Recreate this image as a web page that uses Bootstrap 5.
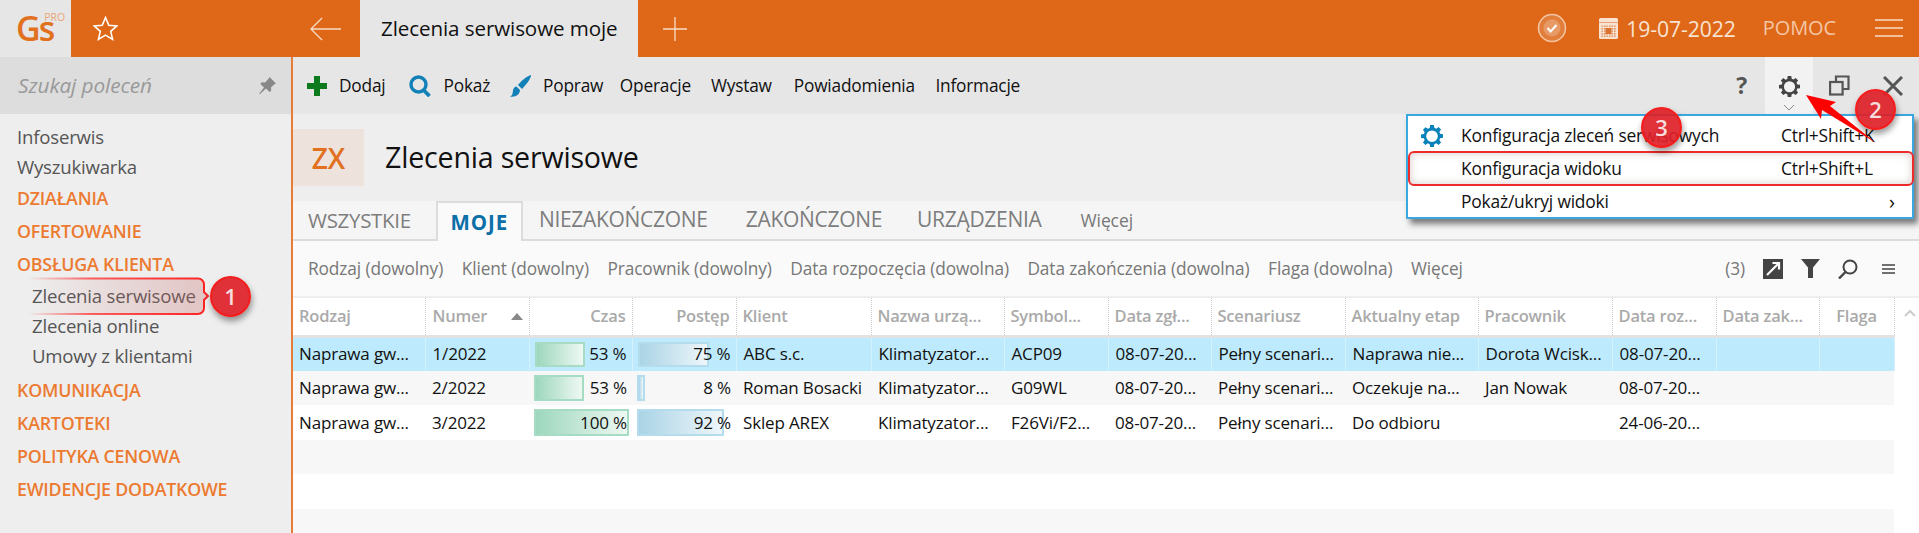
<!DOCTYPE html>
<html lang="pl"><head><meta charset="utf-8">
<link href="https://cdn.jsdelivr.net/npm/bootstrap@5.3.0/dist/css/bootstrap.min.css" rel="stylesheet">
<style>
html,body{height:100%;overflow:hidden}
body{font-family:"Open Sans","Noto Sans",sans-serif;font-size:17px;color:#111;background:#fff;letter-spacing:-.1px}
.shell{width:1919px;height:533px;position:relative;overflow:hidden}
.topbar{height:57px;background:#df6818}
.logo-box{width:71px;background:#e6e6e6;color:#e1701f;padding-left:16px;flex:none}
.logo-g{font-size:34px;font-weight:600;line-height:56px;letter-spacing:-2px}
.logo-pro{font-size:10.5px;color:#eaa77a;margin-top:11px;line-height:12px;margin-left:-9px;letter-spacing:0}
.star-area{width:289px;padding-left:22px;flex:none}
.arrow-back{margin-left:192px}
.tab-active{width:278px;background:#e6e6e6;font-size:20.6px;padding-left:21px;color:#111;flex:none}
.tb-right{color:#f8e3d3;font-size:21.2px;padding-left:25px}
.pomoc{color:#f3c6a5;font-size:20px;margin:0 39px 0 27px}
.main{height:476px}
.side{width:293px;background:#eee;border-right:2px solid #e67c35;flex:none}
.side-search{height:57px;background:#ddd;padding:0 15px 0 18px;color:#999;font-style:italic;font-size:20.8px}
.side-list{padding-top:8px}
.side-item{color:#555;font-size:18.6px;line-height:30px;padding-left:17px;letter-spacing:-.2px}
.side-sub{padding-left:32px}
.side-head{color:#ec7a30;font-weight:600;font-size:17.8px;line-height:33px;padding-left:17px;letter-spacing:-.2px}
.side-head.after-sub{margin-top:3px}
.content{flex:1;min-width:0}
.toolbar{height:57px;background:#e6e6e6;padding-left:14px}
.tool{font-size:17.3px;color:#111;margin-right:19px;letter-spacing:-.2px}
.tool-dodaj{margin-right:24px}
.tool-popraw{margin-right:16.5px}
.tool-oper{margin-right:20px}
.tool-wystaw{margin-right:22px}
.tool-powiad{margin-right:20.5px}
.tool-ic{margin-right:12px;flex:none}
.gear-cell{width:48px;height:57px;background:#f2f2f2;margin-right:16px;padding-top:19px}
.chev{margin-top:8px}
.help-q{font-size:23px;color:#555;font-weight:700;margin-right:18px}
.x-ic{margin:0 16px 0 33px}
.head-band{height:87px;background:#eee}
.zx{width:71px;height:57px;background:#eee3dc;color:#e1701f;font-size:28px;font-weight:600}
.page-title{font-size:28.6px;margin-left:21px;color:#111;font-weight:400;letter-spacing:-.2px}
.tabs-row{height:40px;background:#f5f5f5;border-bottom:2px solid #dcdcdc;padding-left:15px}
.tab-x{font-size:21px;color:#7d7d7d;height:38px;letter-spacing:-.3px;margin-right:38px}
.tab-x.before-on{margin-right:25px;font-size:20.5px}
.tab-x.tab-zak{margin-right:35px}
.tab-x.tab-urz{margin-right:39px}
.tab-on{background:#fafafa;border:2px solid #dcdcdc;border-bottom:0;color:#0b6fa8;font-weight:700;height:40px;width:87px;margin:0 16px -2px 0;font-size:20.5px;letter-spacing:1px}
.tab-x.tab-more{font-size:17.5px;color:#777;letter-spacing:-.1px}
.filters{height:57px;background:#fafafa;padding-left:15px;color:#777;font-size:17.3px;border-bottom:2px solid #eee}
.filters .fl{margin-right:18.500px}
.filter-tools{margin-right:24px}
.filter-tools>*{margin-left:18px}
.grid-wrap{width:1601px}
.grid-table{width:100%;table-layout:fixed;border-collapse:collapse;margin:0;font-size:17px}
.grid-table th{font-weight:600;color:#aaa;height:38px;padding:0 6px;border-right:1px dotted #ccc;border-bottom:3px solid #e2e2e2;background:#fff;white-space:nowrap;overflow:hidden;font-size:16.5px;letter-spacing:-.2px}
.grid-table td{height:34.500px;padding:0 7px;white-space:nowrap;overflow:hidden;color:#111;letter-spacing:-.15px}
.grid-table tr>:first-child{padding-left:6px}
.num-head{padding-left:1px}
.rsel td{background:#bdeafc;border-right:1px solid #d4f1fd}
.ralt td{background:#f7f7f7}
.grid-table td.bar-cell{position:relative;text-align:right;padding:0 5px 0 0}
.bar-val{position:relative}
.bar-fill{position:absolute;left:5px;top:4px;bottom:4px;border:2px solid}
.bar-g{background:linear-gradient(90deg,#9dd7bd,#eef8f3);border-color:#a6dcc3}
.bar-b{background:linear-gradient(90deg,#aad4e6,#eef6fa);border-color:#b5dcec}
.scroll-up{position:absolute;left:1904px;top:309px}
.menu-pop{position:absolute;left:1406px;top:114px;width:508px;height:105px;padding-top:3px;background:#fff;border:2px solid #3ba7e0;box-shadow:4px 5px 6px rgba(0,0,0,.5);font-size:17.4px;letter-spacing:-.2px}
.menu-row{height:33px;padding-left:53px;position:relative}
.menu-short{position:absolute;left:373px}
.menu-arrow{position:absolute;left:481px;font-size:20px}
.menu-gear{position:absolute;left:13px}
.mark-circle{position:absolute;width:41px;height:41px;border-radius:50%;background:rgba(222,32,40,.92);border:2px solid #f51c1c;color:#f6dede;font-size:22px;font-weight:600;box-shadow:1px 4px 6px rgba(0,0,0,.4)}
.mark-1{left:210px;top:276px}.mark-2{left:1855px;top:89px}.mark-3{left:1641px;top:107px}
.outline-red{position:absolute;left:1408px;top:151px;width:506px;height:35px;border:2px solid #ee2b2b;border-radius:6px;box-shadow:inset 0 0 8px rgba(120,60,60,.28)}
.callout{position:absolute;left:26px;top:277px}
.red-arrow{position:absolute;left:1800px;top:90px}
</style></head><body>
<div class="shell">
 <div class="topbar d-flex align-items-stretch">
  <div class="logo-box d-flex"><span class="logo-g">Gs</span><span class="logo-pro">PRO</span></div>
  <div class="star-area d-flex align-items-center">
   <svg width="25" height="25" viewBox="0 0 24 24" fill="none" stroke="#fff" stroke-width="1.500"><path d="M12 1.500l3.100 7.300 7.900.7-6 5.200 1.800 7.700-6.800-4.100-6.800 4.100 1.800-7.700-6-5.200 7.900-.7z"/></svg>
   <svg class="arrow-back" width="31" height="24" viewBox="0 0 31 24" fill="none" stroke="#f8dcc6" stroke-width="1.300"><path d="M31 12H1M12 1L1 12l11 11"/></svg>
  </div>
  <div class="tab-active d-flex align-items-center">Zlecenia serwisowe moje</div>
  <div class="flex-grow-1 d-flex align-items-center tb-right">
   <svg width="24" height="24" viewBox="0 0 24 24" stroke="#f8dcc6" stroke-width="1.300" fill="none"><path d="M12 0v24M0 12h24"/></svg>
   <div class="ms-auto d-flex align-items-center">
    <svg width="30" height="30" viewBox="0 0 30 30" fill="none" class="me-4"><circle cx="15" cy="15" r="13.500" stroke="#f3c6a5" stroke-width="1.500" fill="#e27e3c"/><circle cx="15" cy="15" r="8.500" fill="#e89a66"/><path d="M10.500 15l3.200 3.500 5.800-6.500" stroke="#fff" stroke-width="2"/></svg>
    <svg class="ms-2" width="19" height="21" viewBox="0 0 19 21"><defs><pattern id="calDots" width="2.500" height="2.500" patternUnits="userSpaceOnUse"><rect width="1.500" height="1.500" fill="#dd8c55"/></pattern></defs><rect width="19" height="21" rx="1.500" fill="#f8e3d3"/><rect y="4" width="19" height="1" fill="#e9a678"/><rect x="2" y="7" width="15" height="12" fill="url(#calDots)"/><rect x="6.500" y="10" width="6" height="6" fill="#d9732f"/></svg>
    <span class="ms-2">19-07-2022</span>
    <span class="pomoc">POMOC</span>
    <svg class="me-3" width="28" height="18" viewBox="0 0 28 18" stroke="#f8dcc6" stroke-width="1.400"><path d="M0 1h28M0 9h28M0 17h28"/></svg>
   </div>
  </div>
 </div>
 <div class="main d-flex">
  <div class="side">
   <div class="side-search d-flex align-items-center justify-content-between">Szukaj poleceń
    <svg width="17" height="17" viewBox="0 0 17 17" fill="#888"><path d="M10.500 0L17 6.500l-1.600.7-3.400 3.300.2 3.300-1.600 1.300-3.600-3.600L1 17l-1 0 5-6.500-3.600-3.600L2.700 5.300l3.300.2 3.300-3.400z"/></svg></div>
   <div class="side-list">
    <div class="side-item">Infoserwis</div>
    <div class="side-item">Wyszukiwarka</div>
    <div class="side-head">DZIAŁANIA</div>
    <div class="side-head">OFERTOWANIE</div>
    <div class="side-head">OBSŁUGA KLIENTA</div>
    <div class="side-item side-sub">Zlecenia serwisowe</div>
    <div class="side-item side-sub">Zlecenia online</div>
    <div class="side-item side-sub">Umowy z klientami</div>
    <div class="side-head after-sub">KOMUNIKACJA</div>
    <div class="side-head">KARTOTEKI</div>
    <div class="side-head">POLITYKA CENOWA</div>
    <div class="side-head">EWIDENCJE DODATKOWE</div>
   </div>
  </div>
  <div class="content">
   <div class="toolbar d-flex align-items-center">
    <svg class="tool-ic" width="20" height="20" viewBox="0 0 20 20" fill="#0d7a1d"><path d="M7 0h6v7h7v6h-7v7H7v-7H0V7h7z"/></svg><span class="tool tool-dodaj">Dodaj</span>
    <svg class="tool-ic" width="22" height="22" viewBox="0 0 22 22" fill="none" stroke="#1281b8" stroke-width="3.400"><circle cx="9.500" cy="9.500" r="7.500"/><path d="M14.500 15l6 6" stroke-width="3.800"/></svg><span class="tool">Pokaż</span>
    <svg class="tool-ic" width="22" height="22" viewBox="0 0 22 22" fill="#1281b8"><path d="M22 0c0 4-6 11-9 14l-4-4c3-4 9-9 13-10zM7.500 11.500l3.500 3.500c0 4-4 7.500-10 6.500 3-1 2.500-4 3-6 .4-2.500 2-4 3.500-4z"/></svg><span class="tool tool-popraw">Popraw</span>
    <span class="tool tool-oper">Operacje</span><span class="tool tool-wystaw">Wystaw</span><span class="tool tool-powiad">Powiadomienia</span><span class="tool">Informacje</span>
    <div class="ms-auto d-flex align-items-center">
     <span class="help-q">?</span>
     <div class="gear-cell d-flex flex-column align-items-center">
      <svg width="21" height="21" viewBox="0 0 20 20"><use href="#gear" fill="#444"/></svg>
      <svg class="chev" width="12" height="6" viewBox="0 0 12 6" fill="none" stroke="#888"><path d="M1 0l5 5 5-5"/></svg>
     </div>
     <svg width="21" height="21" viewBox="0 0 21 21" fill="none" stroke="#555" stroke-width="2.200"><rect x="1.100" y="7" width="12.500" height="12.500"/><path d="M7 7V1.500h12.500v12.500H14"/></svg>
     <svg class="x-ic" width="20" height="20" viewBox="0 0 20 20" stroke="#555" stroke-width="3"><path d="M1 1l18 18M19 1L1 19"/></svg>
    </div>
   </div>
   <div class="head-band d-flex align-items-center">
    <div class="zx d-flex align-items-center justify-content-center">ZX</div>
    <h1 class="page-title mb-0">Zlecenia serwisowe</h1>
   </div>
   <div class="tabs-row d-flex align-items-center">
    <span class="tab-x before-on d-flex align-items-center">WSZYSTKIE</span>
    <span class="tab-on d-flex align-items-center justify-content-center">MOJE</span>
    <span class="tab-x d-flex align-items-center">NIEZAKOŃCZONE</span>
    <span class="tab-x tab-zak d-flex align-items-center">ZAKOŃCZONE</span>
    <span class="tab-x tab-urz d-flex align-items-center">URZĄDZENIA</span>
    <span class="tab-x tab-more d-flex align-items-center">Więcej</span>
   </div>
   <div class="filters d-flex align-items-center">
    <span class="fl">Rodzaj (dowolny)</span><span class="fl">Klient (dowolny)</span><span class="fl">Pracownik (dowolny)</span><span class="fl">Data rozpoczęcia (dowolna)</span><span class="fl">Data zakończenia (dowolna)</span><span class="fl">Flaga (dowolna)</span><span class="fl">Więcej</span>
    <div class="ms-auto d-flex align-items-center filter-tools">
     <span>(3)</span>
     <svg width="20" height="20" viewBox="0 0 20 20"><rect width="20" height="20" fill="#444"/><path d="M4 16L16 4M9.500 4H16v6.500" stroke="#fff" stroke-width="2.200" fill="none"/></svg>
     <svg width="19" height="19" viewBox="0 0 19 19" fill="#444"><path d="M0 0h19l-7 8.500V19H7V8.500z"/></svg>
     <svg width="20" height="20" viewBox="0 0 20 20" fill="none" stroke="#444" stroke-width="2"><circle cx="12" cy="8" r="6.500"/><path d="M7.500 13L1 19.500" stroke-width="2.400"/></svg>
     <svg class="ms-4" width="13" height="10" viewBox="0 0 13 10" stroke="#444" stroke-width="1.500"><path d="M0 1h13M0 5h13M0 9h13"/></svg>
    </div>
   </div>
   <div class="grid-wrap">
   <table class="grid-table">
    <colgroup><col style="width:132px"><col style="width:104px"><col style="width:103px"><col style="width:104px"><col style="width:135px"><col style="width:133px"><col style="width:104px"><col style="width:103px"><col style="width:134px"><col style="width:133px"><col style="width:134px"><col style="width:104px"><col style="width:103px"><col style="width:75px"></colgroup>
    <thead><tr><th>Rodzaj</th><th><div class="d-flex justify-content-between align-items-center num-head">Numer<svg width="12" height="7" viewBox="0 0 12 7" fill="#888"><path d="M6 0l6 7H0z"/></svg></div></th><th class="text-end">Czas</th><th class="text-end">Postęp</th><th>Klient</th><th>Nazwa urzą...</th><th>Symbol...</th><th>Data zgł...</th><th>Scenariusz</th><th>Aktualny etap</th><th>Pracownik</th><th>Data roz...</th><th>Data zak...</th><th class="text-center">Flaga</th></tr></thead>
    <tbody>
    <tr class="rsel"><td>Naprawa gw...</td><td>1/2022</td><td class="bar-cell"><span class="bar-fill bar-g" style="width:50px"></span><span class="bar-val">53 %</span></td><td class="bar-cell"><span class="bar-fill bar-b" style="width:71px"></span><span class="bar-val">75 %</span></td><td>ABC s.c.</td><td>Klimatyzator...</td><td>ACP09</td><td>08-07-20...</td><td>Pełny scenari...</td><td>Naprawa nie...</td><td>Dorota Wcisk...</td><td>08-07-20...</td><td></td><td></td></tr>
    <tr class="ralt"><td>Naprawa gw...</td><td>2/2022</td><td class="bar-cell"><span class="bar-fill bar-g" style="width:50px"></span><span class="bar-val">53 %</span></td><td class="bar-cell"><span class="bar-fill bar-b" style="width:8px"></span><span class="bar-val">8 %</span></td><td>Roman Bosacki</td><td>Klimatyzator...</td><td>G09WL</td><td>08-07-20...</td><td>Pełny scenari...</td><td>Oczekuje na...</td><td>Jan Nowak</td><td>08-07-20...</td><td></td><td></td></tr>
    <tr><td>Naprawa gw...</td><td>3/2022</td><td class="bar-cell"><span class="bar-fill bar-g" style="width:95px"></span><span class="bar-val">100 %</span></td><td class="bar-cell"><span class="bar-fill bar-b" style="width:87px"></span><span class="bar-val">92 %</span></td><td>Sklep AREX</td><td>Klimatyzator...</td><td>F26Vi/F2...</td><td>08-07-20...</td><td>Pełny scenari...</td><td>Do odbioru</td><td></td><td>24-06-20...</td><td></td><td></td></tr>
    <tr class="ralt"><td colspan="14">&nbsp;</td></tr>
    <tr><td colspan="14">&nbsp;</td></tr>
    <tr class="ralt"><td colspan="14">&nbsp;</td></tr>
    </tbody>
   </table>
   </div>
  </div>
 </div>
 <svg class="scroll-up" width="12" height="8" viewBox="0 0 12 8" fill="none" stroke="#ccc" stroke-width="2"><path d="M1 7l5-5 5 5"/></svg>
 <svg width="0" height="0" class="position-absolute"><defs><path id="gear" fill-rule="evenodd" d="M8.300 0h3.400l.4 2.600 1.700.7 2.100-1.500 2.300 2.400-1.500 2.100.7 1.700 2.600.4v3.200l-2.600.4-.7 1.700 1.500 2.100-2.300 2.400-2.100-1.500-1.700.7-.4 2.600H8.300l-.4-2.600-1.700-.7-2.100 1.500-2.300-2.400 1.500-2.100-.7-1.700L0 11.800V8.600l2.600-.4.7-1.700-1.500-2.100 2.300-2.400 2.100 1.500 1.700-.7zM10 4.900a5.300 5.300 0 1 0 0 10.600 5.300 5.300 0 0 0 0-10.600z"/><linearGradient id="fadeS" x1="0" x2="1" y1="0" y2="0"><stop offset="0" stop-color="#f22" stop-opacity="0"/><stop offset=".35" stop-color="#f22" stop-opacity=".7"/><stop offset="1" stop-color="#f22"/></linearGradient><linearGradient id="fadeF" x1="0" x2="1" y1="0" y2="0"><stop offset="0" stop-color="#c86a6a" stop-opacity="0"/><stop offset="1" stop-color="#c86a6a" stop-opacity=".32"/></linearGradient></defs></svg>
 <div class="menu-pop">
  <div class="menu-row d-flex align-items-center"><svg class="menu-gear" width="22" height="22" viewBox="0 0 20 20"><use href="#gear" fill="#0b82b8"/></svg>Konfiguracja zleceń serwisowych<span class="menu-short">Ctrl+Shift+K</span></div>
  <div class="menu-row d-flex align-items-center">Konfiguracja widoku<span class="menu-short">Ctrl+Shift+L</span></div>
  <div class="menu-row d-flex align-items-center">Pokaż/ukryj widoki<span class="menu-arrow">›</span></div>
 </div>
 <div class="outline-red"></div>
 <svg class="callout" width="186" height="38" viewBox="0 0 186 38" fill="none"><path d="M2 1.500h170a6 6 0 0 1 6 6V15l4 4-4 4v8a6 6 0 0 1-6 6H2" fill="url(#fadeF)" stroke="url(#fadeS)" stroke-width="2"/></svg>
 <svg class="red-arrow" width="84" height="60" viewBox="1800 90 84 60"><path d="M1806 95L1836 102 1830 106 1876 143 1822 110 1821 119z" fill="#f00"/></svg>
 <div class="mark-circle mark-1 d-flex align-items-center justify-content-center">1</div>
 <div class="mark-circle mark-2 d-flex align-items-center justify-content-center">2</div>
 <div class="mark-circle mark-3 d-flex align-items-center justify-content-center">3</div>
</div>
</body></html>
